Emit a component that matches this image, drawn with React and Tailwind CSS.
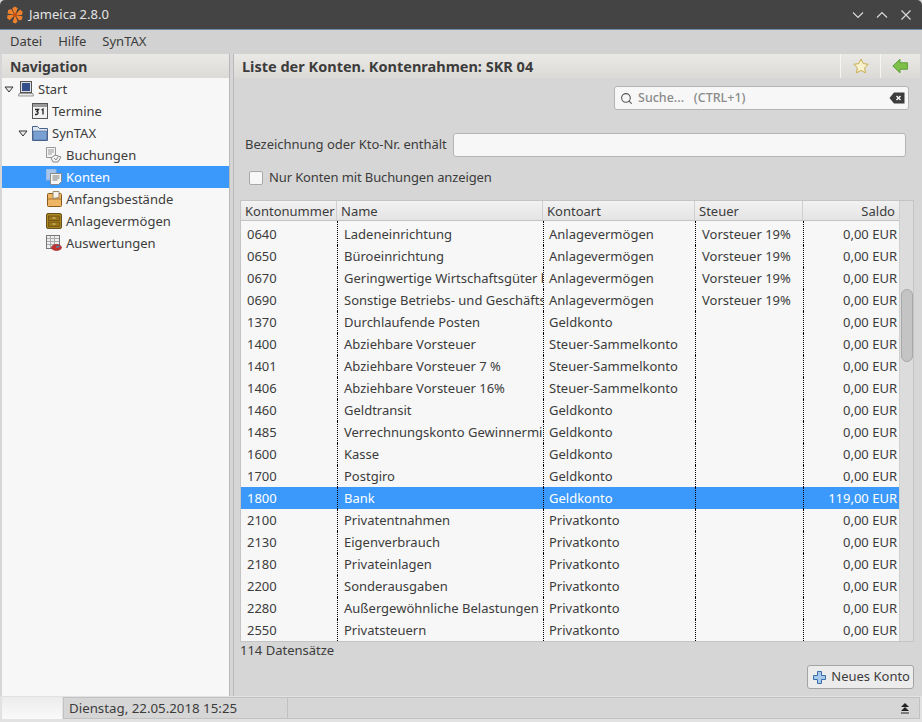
import { Search } from "lucide-react";

const rows = [
  ["0640", "Ladeneinrichtung", "Anlagevermögen", "Vorsteuer 19%", "0,00 EUR"],
  ["0650", "Büroeinrichtung", "Anlagevermögen", "Vorsteuer 19%", "0,00 EUR"],
  ["0670", "Geringwertige Wirtschaftsgüter b", "Anlagevermögen", "Vorsteuer 19%", "0,00 EUR"],
  ["0690", "Sonstige Betriebs- und Geschäfts", "Anlagevermögen", "Vorsteuer 19%", "0,00 EUR"],
  ["1370", "Durchlaufende Posten", "Geldkonto", "", "0,00 EUR"],
  ["1400", "Abziehbare Vorsteuer", "Steuer-Sammelkonto", "", "0,00 EUR"],
  ["1401", "Abziehbare Vorsteuer 7 %", "Steuer-Sammelkonto", "", "0,00 EUR"],
  ["1406", "Abziehbare Vorsteuer 16%", "Steuer-Sammelkonto", "", "0,00 EUR"],
  ["1460", "Geldtransit", "Geldkonto", "", "0,00 EUR"],
  ["1485", "Verrechnungskonto Gewinnermi", "Geldkonto", "", "0,00 EUR"],
  ["1600", "Kasse", "Geldkonto", "", "0,00 EUR"],
  ["1700", "Postgiro", "Geldkonto", "", "0,00 EUR"],
  ["1800", "Bank", "Geldkonto", "", "119,00 EUR"],
  ["2100", "Privatentnahmen", "Privatkonto", "", "0,00 EUR"],
  ["2130", "Eigenverbrauch", "Privatkonto", "", "0,00 EUR"],
  ["2180", "Privateinlagen", "Privatkonto", "", "0,00 EUR"],
  ["2200", "Sonderausgaben", "Privatkonto", "", "0,00 EUR"],
  ["2280", "Außergewöhnliche Belastungen", "Privatkonto", "", "0,00 EUR"],
  ["2550", "Privatsteuern", "Privatkonto", "", "0,00 EUR"],
];

const Logo = () => (
  <svg width="18" height="18" viewBox="0 0 18 18">
    <g fill="#f0802c">
      <path d="M9 9L6.2 2.2 9 .6l2.8 1.6z" />
      <path d="M9 9l5.2-5.4 2.6 2.4-1 3z" />
      <path d="M9 9l7.4 1.2-.4 3.4-2.8 1z" />
      <path d="M9 9l2.6 6.8-2.2 1.8-2.8-1.4z" />
      <path d="M9 9l-5.4 5.2-2.6-2.2.6-3z" />
      <path d="M9 9L1.6 7.6 2.2 4l3-1z" />
    </g>
    <circle cx="9" cy="9" r="2.2" fill="#c8500f" />
  </svg>
);

const Arrow = () => (
  <svg width="10" height="7" viewBox="0 0 10 7">
    <path d="M1 1h8L5 6z" fill="#e8e8e8" stroke="#333" strokeWidth="1" />
  </svg>
);

const IconStart = () => (
  <svg width="16" height="16" viewBox="0 0 16 16">
    <rect x="2.5" y="0.5" width="11" height="11" fill="#ddd" stroke="#555" />
    <rect x="4" y="2" width="8" height="8" fill="#34508c" />
    <path d="M1 12.5h14l.5 2.5H.5z" fill="#e8e8e8" stroke="#777" strokeWidth="0.7" />
  </svg>
);

const IconCal = () => (
  <svg width="16" height="16" viewBox="0 0 16 16">
    <rect x="0.5" y="0.5" width="15" height="15" fill="#f2f2f2" stroke="#555" />
    <rect x="1" y="1" width="14" height="3" fill="#9a9a9a" />
    <path d="M3 6.5h3.5L5 8.5c1.5 0 1.5 3-.5 3H3M9.5 7l1.5-.8V11.5" fill="none" stroke="#222" strokeWidth="1.3" />
  </svg>
);

const IconFolder = () => (
  <svg width="16" height="15" viewBox="0 0 16 15">
    <path d="M.5 14.5V.5h5l2 2h8v12z" fill="#dfe6f0" stroke="#47628e" />
    <path d="M1.5 14V5h13v9z" fill="#78a0d2" stroke="#47628e" strokeWidth="0.6" />
  </svg>
);

const IconBook = () => (
  <svg width="16" height="16" viewBox="0 0 16 16">
    <path d="M.5.5h9v10h-9z" fill="#f4f4f4" stroke="#999" />
    <path d="M2 3h6M2 5h6M2 7h4" stroke="#999" />
    <path d="M5 11l4-3 6 2-3 5-5 0z" fill="#f4f4f4" stroke="#888" />
    <path d="M8 11l2 2 2-3" fill="none" stroke="#888" />
  </svg>
);

const IconKonten = () => (
  <svg width="16" height="16" viewBox="0 0 16 16">
    <rect x="0" y="0" width="10" height="11" fill="#a9c6ea" stroke="#8fb0da" />
    <path d="M4.5 4.5h11v8l-3 3h-8z" fill="#f8f8f8" stroke="#888" />
    <path d="M6.5 7h7M6.5 9h7M6.5 11h5" stroke="#777" />
  </svg>
);

const IconStart2 = () => (
  <svg width="15" height="16" viewBox="0 0 15 16">
    <rect x="0.5" y="2.5" width="14" height="13" rx="1" fill="#eeb565" stroke="#8a5a1c" />
    <path d="M1 8h13" stroke="#a8742c" />
    <path d="M6 .5h6v6l-6 1z" fill="#f7f3ea" stroke="#9a8a6a" />
  </svg>
);

const IconCabinet = () => (
  <svg width="16" height="16" viewBox="0 0 16 16">
    <rect x="0.5" y="0.5" width="15" height="15" rx="1.5" fill="#b0861e" stroke="#5f5222" />
    <rect x="2.5" y="3" width="11" height="4.5" fill="#9a7418" stroke="#5f4a12" strokeWidth="0.7" />
    <rect x="2.5" y="9" width="11" height="4.5" fill="#9a7418" stroke="#5f4a12" strokeWidth="0.7" />
    <path d="M6.5 5h3M6.5 11h3" stroke="#e8cf80" />
  </svg>
);

const IconReport = () => (
  <svg width="16" height="16" viewBox="0 0 16 16">
    <rect x="0.5" y="0.5" width="13" height="13" fill="#eee" stroke="#777" />
    <path d="M1 3.5h12M1 6.5h12M1 9.5h12M4.5 1v12M8.5 1v12" stroke="#aaa" />
    <ellipse cx="10.5" cy="12.5" rx="5" ry="3" fill="#c8302c" stroke="#8c1c1c" strokeWidth="0.6" />
    <path d="M9.5 12l3-1.5 1.5 1-3 1.5z" fill="#4a86b8" />
  </svg>
);

const TreeRow = ({ indent, arrow, icon, label, active }) => (
  <div className={`flex h-[22px] items-center ${active ? "bg-[#3b99fc] text-white" : "text-[#3c3c3c]"}`}>
    <div className={indent}></div>
    <div className="flex w-[14px] justify-center">{arrow && <Arrow />}</div>
    <div className="flex w-[20px] justify-center">{icon}</div>
    <span className="ml-[2px] pt-[2px]">{label}</span>
  </div>
);

const Cell = ({ className = "", first, children }) => (
  <div className={`h-full overflow-hidden whitespace-nowrap leading-[22px] ${first ? "pt-[2px]" : ""} ${className}`}>
    {children}
  </div>
);

export default function App() {
  return (
    <div
      className="flex h-[722px] w-[922px] flex-col bg-[#d6d6d6] text-[13px] text-[#3c3c3c]"
      style={{ fontFamily: '"Noto Sans", sans-serif' }}
    >
      {/* titlebar */}
      <div className="flex h-[30px] shrink-0 items-center rounded-t-[5px] border-b border-[#6d8aa8] bg-[#444444] pl-[6px] pr-[10px] text-white">
        <Logo />
        <span className="ml-[5px] text-[#e4e4e4]">Jameica 2.8.0</span>
        <div className="ml-auto flex items-center gap-[12px]">
          <svg width="12" height="12" viewBox="0 0 12 12"><path d="M1 3.5l5 5 5-5" fill="none" stroke="#ddd" strokeWidth="1.1" /></svg>
          <svg width="12" height="12" viewBox="0 0 12 12"><path d="M1 8.5l5-5 5 5" fill="none" stroke="#ddd" strokeWidth="1.1" /></svg>
          <svg width="12" height="12" viewBox="0 0 12 12"><path d="M1.5 1.5l9 9M10.5 1.5l-9 9" fill="none" stroke="#ddd" strokeWidth="1.1" /></svg>
        </div>
      </div>

      {/* menu */}
      <div className="flex h-[24px] shrink-0 items-center gap-[16px] bg-[#d2d2d2] pl-[10px] text-[#3c3c3c]">
        <span>Datei</span>
        <span>Hilfe</span>
        <span>SynTAX</span>
      </div>

      <div className="flex min-h-0 flex-1 gap-[3px] px-[2px]">
        {/* navigation */}
        <div className="flex w-[228px] shrink-0 flex-col border-r border-[#b8b8b8]">
          <div className="flex h-[24px] shrink-0 items-center bg-gradient-to-b from-[#ebe9e6] to-[#dcdad6] pl-[8px] text-[14px] font-bold text-[#3c3c3c]">
            Navigation
          </div>
          <div className="flex-1 bg-[#f7f7f7]">
            <TreeRow indent="w-0" arrow icon={<IconStart />} label="Start" />
            <TreeRow indent="w-[14px]" icon={<IconCal />} label="Termine" />
            <TreeRow indent="w-[14px]" arrow icon={<IconFolder />} label="SynTAX" />
            <TreeRow indent="w-[28px]" icon={<IconBook />} label="Buchungen" />
            <TreeRow indent="w-[28px]" icon={<IconKonten />} label="Konten" active />
            <TreeRow indent="w-[28px]" icon={<IconStart2 />} label="Anfangsbestände" />
            <TreeRow indent="w-[28px]" icon={<IconCabinet />} label="Anlagevermögen" />
            <TreeRow indent="w-[28px]" icon={<IconReport />} label="Auswertungen" />
          </div>
        </div>

        {/* main */}
        <div className="flex min-w-0 flex-1 flex-col border-l border-[#b8b8b8]">
          <div className="flex h-[24px] shrink-0 items-center bg-gradient-to-b from-[#ebe9e6] to-[#dcdad6] pl-[8px] text-[14.5px] font-bold">
            <span className="pt-px">Liste der Konten. Kontenrahmen: SKR 04</span>
            <div className="ml-auto flex h-full">
              <div className="flex w-[40px] items-center justify-center border-l border-[#f5f5f5]">
                <svg width="16" height="16" viewBox="0 0 16 16">
                  <path d="M8 1l2.2 4.6 5 .7-3.6 3.5.9 5L8 12.4l-4.5 2.4.9-5L.8 6.3l5-.7z" fill="#f8f2cf" stroke="#c8ae4e" />
                </svg>
              </div>
              <div className="flex w-[40px] items-center justify-center border-l border-[#f5f5f5] pr-[2px]">
                <svg width="16" height="16" viewBox="0 0 16 16">
                  <path d="M.8 8L8 1.2v3.6h7.4v6.4H8v3.6z" fill="#7cc04a" stroke="#5f9e36" />
                </svg>
              </div>
            </div>
          </div>

          <div className="mt-[8px] flex shrink-0 justify-end pr-[11px]">
            <div className="flex h-[24px] w-[295px] items-center rounded-[3px] border border-[#b4b4b4] bg-[#f7f7f7] pl-[5px] pr-[3px] text-[12.5px] text-[#8a8a8a]">
              <Search size={13} color="#555" />
              <span className="ml-[5px] font-medium">Suche...&nbsp;&nbsp;&nbsp;(CTRL+1)</span>
              <svg className="ml-auto" width="16" height="12" viewBox="0 0 16 12">
                <path d="M5 .5h10.5v11H5L.5 6z" fill="#3c3c3c" />
                <path d="M7.5 4l4 4M11.5 4l-4 4" stroke="#fff" strokeWidth="1.4" />
              </svg>
            </div>
          </div>

          <div className="mt-[23px] flex h-[24px] shrink-0 items-center pl-[11px] pr-[14px]">
            <span className="tracking-[-0.02px]">Bezeichnung oder Kto-Nr. enthält</span>
            <div className="ml-[6px] h-[24px] flex-1 rounded-[3px] border border-[#b4b4b4] bg-[#f7f7f7]"></div>
          </div>

          <div className="mt-[11px] flex h-[20px] shrink-0 items-center pl-[15px]">
            <div className="h-[14px] w-[14px] rounded-[2px] border border-[#a8a8a8] bg-[#f7f7f7]"></div>
            <span className="ml-[6px] tracking-[-0.12px]">Nur Konten mit Buchungen anzeigen</span>
          </div>

          {/* table */}
          <div className="ml-[6px] mr-[6px] mt-[12px] flex h-[442px] shrink-0 border border-[#c4c4c4] bg-[#f7f7f7]">
            <div className="min-w-0 flex-1">
              <div className="flex h-[20px] border-b border-[#c4c4c4] bg-gradient-to-b from-[#f2f2f2] to-[#e4e4e4] text-[#3c3c3c]">
                <div className="w-[96px] border-r border-[#d0d0d0] pl-[4px] leading-[21px]">Kontonummer</div>
                <div className="w-[206px] border-r border-[#d0d0d0] pl-[4px] leading-[21px]">Name</div>
                <div className="w-[152px] border-r border-[#d0d0d0] pl-[4px] leading-[21px]">Kontoart</div>
                <div className="w-[108px] border-r border-[#d0d0d0] pl-[4px] leading-[21px]">Steuer</div>
                <div className="flex-1 pr-[4px] text-right leading-[21px]">Saldo</div>
              </div>
              {rows.map((r, i) => {
                const sel = r[0] === "1800";
                const first = i === 0;
                return (
                  <div key={r[0]} className={`flex ${first ? "h-[24px]" : "h-[22px]"} ${sel ? "bg-[#3b99fc] text-white" : ""}`}>
                    <Cell first={first} className="w-[96px] pl-[6px]">{r[0]}</Cell>
                    <Cell first={first} className="w-[206px] border-l border-dotted border-black pl-[6px]">{r[1]}</Cell>
                    <Cell first={first} className="w-[152px] border-l border-dotted border-black pl-[5px]">{r[2]}</Cell>
                    <Cell first={first} className="w-[108px] border-l border-dotted border-black pl-[6px]">{r[3]}</Cell>
                    <Cell first={first} className="flex-1 border-l border-dotted border-black pr-[2px] text-right">{r[4]}</Cell>
                  </div>
                );
              })}
            </div>
            <div className="w-[14px] shrink-0 border-l border-[#cfcfcf] bg-[#dcdcdc] pt-[88px]">
              <div className="mx-auto h-[73px] w-[12px] rounded-[6px] border border-[#a8a8a8] bg-[#c4c4c4]"></div>
            </div>
          </div>

          <div className="ml-[6px] h-[16px] shrink-0 leading-[16px]">114 Datensätze</div>

          <div className="flex flex-1 items-start justify-end pr-[6px] pt-[7px]">
            <div className="flex h-[24px] items-center rounded-[3px] border border-[#a4a4a4] bg-[#ececec] pl-[5px] pr-[3px]">
              <svg width="13" height="13" viewBox="0 0 13 13">
                <path d="M4.5.5h4v4h4v4h-4v4h-4v-4h-4v-4h4z" fill="#a8c8ec" stroke="#3a6ea8" />
              </svg>
              <span className="ml-[5px]">Neues Konto</span>
            </div>
          </div>
        </div>
      </div>

      {/* statusbar */}
      <div className="flex h-[26px] shrink-0 gap-[1px] bg-[#e2e2e2] px-[2px] pb-[3px] pt-px">
        <div className="w-[60px] bg-gradient-to-b from-[#ececec] to-[#fafafa]"></div>
        <div className="flex flex-1 items-center border border-[#c2c2c2] bg-[#d6d6d6] pl-[5px] pr-[9px]">
          <span className="w-[219px] border-r border-[#c2c2c2] pt-px text-[13.3px]">Dienstag, 22.05.2018 15:25</span>
          <svg className="ml-auto" width="10" height="11" viewBox="0 0 10 11">
            <path d="M5 0l4 4H1zM5 4l4 4H1z" fill="#222" />
            <path d="M1 10h8" stroke="#222" />
          </svg>
        </div>
      </div>
    </div>
  );
}
